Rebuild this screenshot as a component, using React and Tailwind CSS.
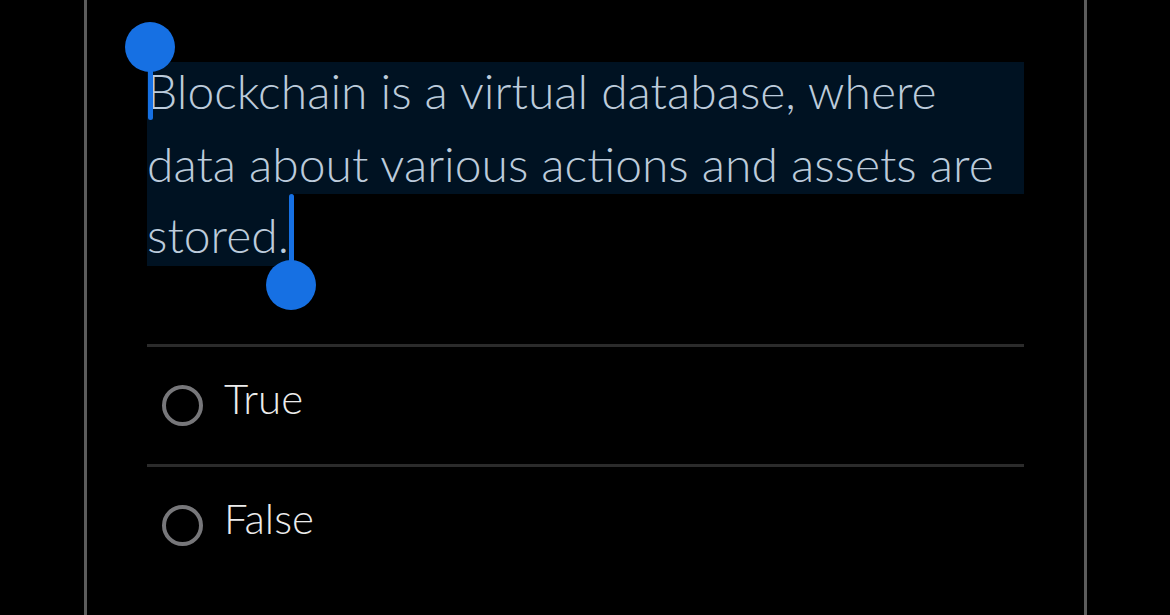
import { useState } from "react";

const options = ["True", "False"];

function Radio({ label, checked, onSelect }) {
  return (
    <button
      onClick={onSelect}
      className="flex h-[117px] w-full items-center gap-[21px] pl-[15px] text-left"
    >
      <span className="flex h-[41px] w-[41px] items-center justify-center rounded-full border-[4px] border-[#77777a]">
        {checked && <span className="h-[19px] w-[19px] rounded-full bg-[#77777a]" />}
      </span>
      <span className="mb-[16px] text-[42px] font-light leading-none text-[#ececec]">{label}</span>
    </button>
  );
}

export default function App() {
  const [answer, setAnswer] = useState(null);

  return (
    <div className="h-[615px] overflow-hidden bg-black font-['Lato','Liberation_Sans',sans-serif]">
      <div className="ml-[84px] h-full w-[1003px] border-x-[3px] border-[#5c5c5c] px-[60px] pt-[62px]">
        <div className="relative text-[48px] font-light text-[#bccbdb]">
          <div className="h-[66px] bg-[#001222] leading-[57px]">Blockchain is a virtual database, where</div>
          <div className="h-[66px] bg-[#001222] leading-[71px]">data about various actions and assets are</div>
          <div className="h-[72px]">
            <span className="inline-block h-[72px] bg-[#001222] pr-[4px] leading-[81px]">stored.</span>
          </div>

          {/* selection handles */}
          <div className="absolute left-[-22px] top-[-40px] flex flex-col items-center">
            <span className="h-[50px] w-[50px] rounded-full bg-[#1670e3]" />
            <span className="-mt-[2px] h-[50px] w-[5px] rounded-b-full bg-[#1670e3]" />
          </div>
          <div className="absolute left-[119px] top-[132px] flex flex-col items-center">
            <span className="h-[68px] w-[5px] rounded-t-full bg-[#1670e3]" />
            <span className="-mt-[2px] h-[50px] w-[50px] rounded-full bg-[#1670e3]" />
          </div>
        </div>

        <div className="mt-[78px] border-t-[3px] border-[#2b2b2b]">
          <Radio label={options[0]} checked={answer === 0} onSelect={() => setAnswer(0)} />
        </div>
        <div className="border-t-[3px] border-[#2b2b2b]">
          <Radio label={options[1]} checked={answer === 1} onSelect={() => setAnswer(1)} />
        </div>
      </div>
    </div>
  );
}
